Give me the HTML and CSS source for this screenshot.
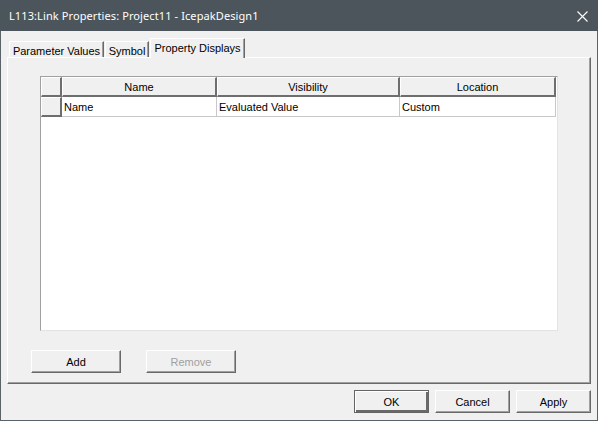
FILE: index.html
```html
<!DOCTYPE html>
<html lang="en">
<head>
    <meta charset="UTF-8">
    <title>L113:Link Properties: Project11 - IcepakDesign1</title>
    <link rel="stylesheet" href="styles.css">
</head>
<body>
    <div class="window">
        <div class="titlebar">
            <span class="title">L113:Link Properties: Project11 - IcepakDesign1</span>
            <svg class="close" width="11" height="11" viewBox="0 0 11 11">
                <path d="M0.5 0.5 L10.5 10.5 M10.5 0.5 L0.5 10.5" stroke="#ffffff" stroke-width="1.1" fill="none"/>
            </svg>
        </div>

        <div class="tabs">
            <div class="tab tab-params">Parameter Values</div>
            <div class="tab tab-symbol">Symbol</div>
            <div class="tab tab-displays active">Property Displays</div>
        </div>

        <div class="panel">
            <div class="grid">
                <table>
                    <tr>
                        <th class="corner"></th>
                        <th class="col-name">Name</th>
                        <th class="col-vis">Visibility</th>
                        <th class="col-loc">Location</th>
                    </tr>
                    <tr>
                        <th class="corner"></th>
                        <td>Name</td>
                        <td>Evaluated Value</td>
                        <td>Custom</td>
                    </tr>
                </table>
            </div>

            <div class="panel-buttons">
                <button class="btn">Add</button>
                <button class="btn" disabled>Remove</button>
            </div>
        </div>

        <div class="dialog-buttons">
            <button class="btn default">OK</button>
            <button class="btn">Cancel</button>
            <button class="btn">Apply</button>
        </div>
    </div>
</body>
</html>
```

FILE: styles.css
```css
body {
    margin: 0;
    font-family: "Liberation Sans", Arial, sans-serif;
    font-size: 11px;
    color: #000000;
    background-color: #f0f0f0;
}
.window {
    width: 598px;
    height: 421px;
    box-sizing: border-box;
    border: 1px solid #5a6368;
    border-top: none;
    background-color: #f0f0f0;
}
.titlebar {
    height: 31px;
    margin: 0 -1px;
    background-color: #4b555b;
    color: #ffffff;
    display: flex;
    align-items: center;
    justify-content: space-between;
    padding: 0 10px 0 9px;
}
.title {
    font-family: "Noto Sans", sans-serif;
    font-size: 11px;
    letter-spacing: 0.1px;
    padding-bottom: 1px;
}
.close {
    display: block;
    margin-top: 1px;
}

/* tab strip */
.tabs {
    display: flex;
    align-items: flex-end;
    height: 19px;
    margin: 7px 0 0 8px;
    position: relative;
    z-index: 1;
}
.tab {
    box-sizing: border-box;
    height: 16px;
    margin-right: 1px;
    padding-top: 3px;
    text-align: center;
    background-color: #f0f0f0;
    border-top: 1px solid #ffffff;
    border-left: 1px solid #ffffff;
    border-right: 1px solid #696969;
    box-shadow: inset -1px 0 #a0a0a0;
    white-space: nowrap;
}
.tab-params {
    width: 95px;
}
.tab-symbol {
    width: 44px;
}
.tab-displays {
    width: 95px;
}
.tab.active {
    height: 20px;
    margin-bottom: -1px;
    padding-top: 3px;
}

/* tab page */
.panel {
    box-sizing: border-box;
    height: 327px;
    margin: 0 6px;
    border-top: 1px solid #ffffff;
    border-left: 1px solid #ffffff;
    border-right: 1px solid #696969;
    border-bottom: 1px solid #696969;
    box-shadow: inset -1px -1px #a0a0a0;
}
.grid {
    box-sizing: border-box;
    width: 518px;
    height: 255px;
    margin: 18px 0 0 32px;
    background-color: #ffffff;
    border-top: 1px solid #a0a0a0;
    border-left: 1px solid #a0a0a0;
    border-right: 1px solid #e3e3e3;
    border-bottom: 1px solid #e3e3e3;
}
table {
    border-collapse: separate;
    border-spacing: 0;
    table-layout: fixed;
}
th, td {
    box-sizing: border-box;
    height: 20px;
    padding: 0 2px;
    font-weight: normal;
    white-space: nowrap;
    overflow: hidden;
}
th {
    background-color: #f0f0f0;
    text-align: center;
    border-top: 1px solid #ffffff;
    border-left: 1px solid #ffffff;
    border-right: 2px solid #6e6e6e;
    border-bottom: 2px solid #6e6e6e;
}
td {
    text-align: left;
    border-right: 1px solid #c8c8c8;
    border-bottom: 1px solid #c8c8c8;
    padding-left: 2px;
}
.corner {
    width: 21px;
}
.col-name {
    width: 155px;
}
.col-vis {
    width: 183px;
}
.col-loc {
    width: 156px;
}

/* buttons */
.btn {
    box-sizing: border-box;
    height: 23px;
    padding: 0;
    font-family: "Liberation Sans", Arial, sans-serif;
    font-size: 11px;
    color: #000000;
    background-color: #f0f0f0;
    border-top: 1px solid #ffffff;
    border-left: 1px solid #ffffff;
    border-right: 1px solid #696969;
    border-bottom: 1px solid #696969;
    box-shadow: inset -1px -1px #a0a0a0;
}
.btn:disabled {
    color: #a0a0a0;
}
.btn.default {
    border: 1px solid #646464;
    box-shadow: inset 1px 1px #ffffff, inset -2px -2px #696969;
}
.panel-buttons {
    display: flex;
    gap: 25px;
    margin: 19px 0 0 23px;
}
.panel-buttons .btn {
    width: 90px;
}
.dialog-buttons {
    display: flex;
    justify-content: flex-end;
    gap: 6px;
    margin: 6px 6px 0 0;
}
.dialog-buttons .btn {
    width: 75px;
}
```
